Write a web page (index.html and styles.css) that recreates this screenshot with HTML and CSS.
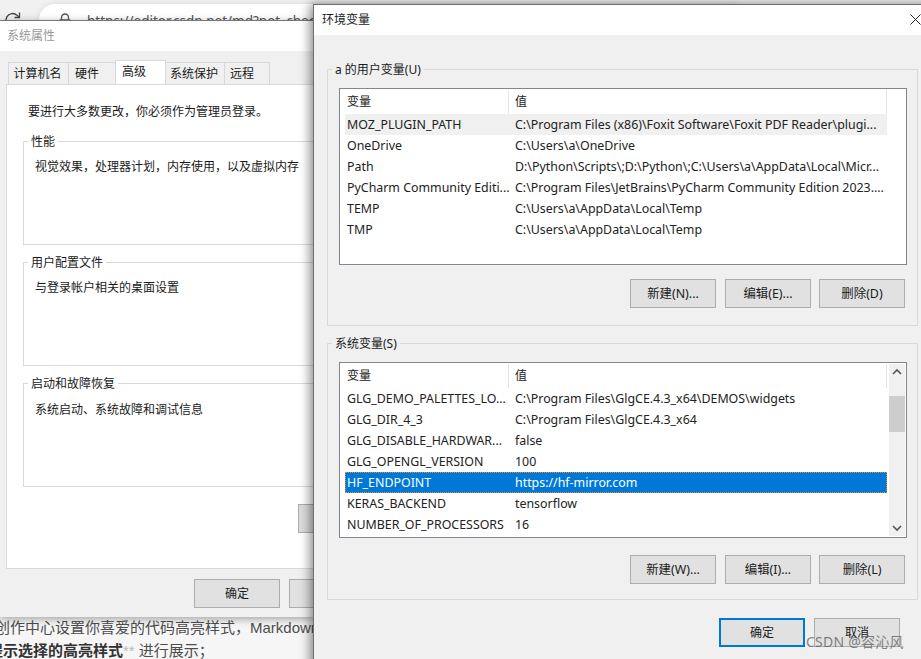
FILE: index.html
```html
<!DOCTYPE html>
<html lang="zh-CN">
<head>
<meta charset="utf-8">
<title>环境变量</title>
<link rel="stylesheet" href="styles.css">
</head>
<body>
<div class="desktop">
  <div class="browser">
    <svg class="reload" width="18" height="18" viewBox="0 0 18 18"><path d="M15 9a6.5 6.5 0 1 1-2-4.7L15 6" fill="none" stroke="#444" stroke-width="1.3"/><path d="M15.5 1.5v5h-5" fill="none" stroke="#444" stroke-width="1.3"/></svg>
    <div class="urlbar">
      <svg class="lock" width="14" height="16" viewBox="0 0 14 16"><path d="M3.5 7V4.5a3.5 3.5 0 0 1 7 0V7" fill="none" stroke="#555" stroke-width="1.3"/><rect x="1.5" y="7" width="11" height="8" rx="1" fill="none" stroke="#555" stroke-width="1.3"/></svg>
      <span class="url">https://editor.csdn.net/md?not_checkout=1</span>
    </div>
  </div>
  <div class="page-text">
    <p class="page-line">创作中心设置你喜爱的代码高亮样式，Markdown</p>
    <p class="page-line page-line-2"><b>提示选择的高亮样式</b><span class="stars">**</span> 进行展示；</p>
  </div>

  <section class="win win-left">
    <header class="title title-left">系统属性</header>
    <div class="win-body-left">
      <div class="tabs">
        <span class="tab tab-1">计算机名</span>
        <span class="tab tab-2">硬件</span>
        <span class="tab tab-active">高级</span>
        <span class="tab tab-4">系统保护</span>
        <span class="tab tab-5">远程</span>
      </div>
      <div class="panel">
        <p class="notice">要进行大多数更改，你必须作为管理员登录。</p>
        <fieldset class="sec sec-1"><legend>性能</legend><p>视觉效果，处理器计划，内存使用，以及虚拟内存</p></fieldset>
        <fieldset class="sec sec-2"><legend>用户配置文件</legend><p>与登录帐户相关的桌面设置</p></fieldset>
        <fieldset class="sec sec-3"><legend>启动和故障恢复</legend><p>系统启动、系统故障和调试信息</p></fieldset>
        <div class="panel-btn-row"><span class="btn btn-cut"></span></div>
      </div>
      <div class="left-actions">
        <span class="btn">确定</span>
        <span class="btn btn-cut"></span>
      </div>
    </div>
  </section>

  <section class="win win-right">
    <header class="title title-right">环境变量
      <svg class="close" width="11" height="11" viewBox="0 0 11 11"><path d="M.5.5l10 10M10.5.5l-10 10" stroke="#222" stroke-width="1" fill="none"/></svg>
    </header>
    <div class="win-body-right">
      <fieldset class="group group-user">
        <legend>a 的用户变量(U)</legend>
        <div class="list">
          <div class="row head"><span class="k">变量</span><span class="v">值</span></div>
          <div class="row soft"><span class="k">MOZ_PLUGIN_PATH</span><span class="v">C:\Program Files (x86)\Foxit Software\Foxit PDF Reader\plugi...</span></div>
          <div class="row"><span class="k">OneDrive</span><span class="v">C:\Users\a\OneDrive</span></div>
          <div class="row"><span class="k">Path</span><span class="v">D:\Python\Scripts\;D:\Python\;C:\Users\a\AppData\Local\Micr...</span></div>
          <div class="row"><span class="k">PyCharm Community Editi...</span><span class="v">C:\Program Files\JetBrains\PyCharm Community Edition 2023....</span></div>
          <div class="row"><span class="k">TEMP</span><span class="v">C:\Users\a\AppData\Local\Temp</span></div>
          <div class="row"><span class="k">TMP</span><span class="v">C:\Users\a\AppData\Local\Temp</span></div>
        </div>
        <div class="actions">
          <span class="btn">新建(N)...</span><span class="btn">编辑(E)...</span><span class="btn">删除(D)</span>
        </div>
      </fieldset>
      <fieldset class="group group-sys">
        <legend>系统变量(S)</legend>
        <div class="list">
          <div class="row head"><span class="k">变量</span><span class="v">值</span></div>
          <div class="row"><span class="k">GLG_DEMO_PALETTES_LO...</span><span class="v">C:\Program Files\GlgCE.4.3_x64\DEMOS\widgets</span></div>
          <div class="row"><span class="k">GLG_DIR_4_3</span><span class="v">C:\Program Files\GlgCE.4.3_x64</span></div>
          <div class="row"><span class="k">GLG_DISABLE_HARDWAR...</span><span class="v">false</span></div>
          <div class="row"><span class="k">GLG_OPENGL_VERSION</span><span class="v">100</span></div>
          <div class="row selected"><span class="k">HF_ENDPOINT</span><span class="v">https://hf-mirror.com</span></div>
          <div class="row"><span class="k">KERAS_BACKEND</span><span class="v">tensorflow</span></div>
          <div class="row"><span class="k">NUMBER_OF_PROCESSORS</span><span class="v">16</span></div>
          <div class="scrollbar">
            <svg width="16" height="16" viewBox="0 0 16 16"><path d="M4 10l4-4 4 4" fill="none" stroke="#555" stroke-width="1.6"/></svg>
            <div class="track"><div class="thumb"></div></div>
            <svg width="16" height="16" viewBox="0 0 16 16"><path d="M4 6l4 4 4-4" fill="none" stroke="#555" stroke-width="1.6"/></svg>
          </div>
        </div>
        <div class="actions">
          <span class="btn">新建(W)...</span><span class="btn">编辑(I)...</span><span class="btn">删除(L)</span>
        </div>
      </fieldset>
      <div class="footer">
        <span class="btn btn-default">确定</span><span class="btn">取消</span>
      </div>
    </div>
  </section>
  <div class="watermark">CSDN @容沁风</div>
</div>
</body>
</html>
```
FILE: styles.css
```css
* { box-sizing: border-box; }
html, body { margin: 0; padding: 0; }
body { width: 921px; height: 659px; overflow: hidden; }
.desktop {
  position: relative; width: 921px; height: 659px; overflow: hidden; background: #f6f6f6;
  font: 12px/16px "Noto Sans", "Noto Sans CJK SC", sans-serif; color: #1a1a1a;
}
.browser { display: flex; align-items: flex-start; height: 21px; padding: 4px 0 0 4px; background: #f1f1f1; }
.reload { margin-top: 7px; flex: none; }
.urlbar { display: flex; margin: 0 0 0 17px; padding: 8px 0 0 19px; gap: 15px; width: 700px; height: 40px; background: #fff; border-radius: 16px 0 0 0; box-shadow: 0 0 6px rgba(0,0,0,.1); white-space: nowrap; }
.lock { flex: none; margin-top: 1px; }
.url { font: 13.5px/18px "Noto Sans", sans-serif; color: #555; }
.page-text { position: absolute; left: -5px; top: 617px; width: 330px; height: 42px; white-space: nowrap; overflow: hidden; font: 15px/20px "Liberation Sans", "Noto Sans CJK SC", sans-serif; color: #4d4d4d; }
.page-line { margin: 0; line-height: 20px; padding-top: 1px; }
.page-line-2 { margin-top: 2px; }
.page-line-2 b { color: #333; margin-left: -7px; }
.stars { color: #bbb; }

.win { position: absolute; background: #f0f0f0; }
.win-left { left: 0; top: 20px; width: 314px; height: 597px; border-top: 1px solid #777; box-shadow: 0 2px 8px rgba(0,0,0,.35); }
.title { background: #fff; font-size: 12px; display: flex; align-items: center; justify-content: space-between; }
.title-left { height: 30px; padding-left: 7px; color: #999; }
.win-body-left { padding-top: 10px; }
.tabs { display: flex; align-items: flex-end; height: 23px; padding-left: 8px; }
.tab { height: 22px; padding-top: 3px; text-align: center; border: 1px solid #d9d9d9; border-bottom: 0; border-right: 0; background: #f0f0f0; }
.tab-1 { width: 60px; padding-right: 2px; }
.tab-2 { width: 47px; text-align: left; padding-left: 6px; }
.tab-active { width: 51px; height: 24px; background: #fff; border-right: 1px solid #d9d9d9; padding: 3px 0 0 6px; text-align: left; }
.tab-4 { width: 58px; border-left: 0; padding-right: 2px; }
.tab-5 { width: 46px; border-right: 1px solid #d9d9d9; text-align: left; padding-left: 5px; }
.panel { margin-left: 6px; height: 485px; background: #fff; border: 1px solid #d9d9d9; border-right: 0; padding: 19px 0 0 16px; overflow: hidden; }
.notice { margin: 0 0 12px 5px; }
.sec { margin: 0; padding: 9px 0 0 11px; width: 300px; min-width: 0; border: 1px solid #d9d9d9; border-right: 0; }
.sec legend { padding: 2px 3px 0; margin-left: -7px; line-height: 16px; }
.sec p { margin: 0; }
.sec-1 { height: 113px; margin-bottom: 8px; }
.sec-2 { height: 113px; margin-bottom: 8px; }
.sec-3 { height: 113px; padding-top: 10px; }
.panel-btn-row { display: flex; justify-content: flex-end; padding-top: 17px; }
.left-actions { display: flex; gap: 9px; margin: 10px 0 0 194px; }
.btn { display: flex; align-items: center; justify-content: center; width: 86px; height: 29px; flex: none; background: #e1e1e1; border: 1px solid #adadad; white-space: nowrap; }
.btn-cut { width: 30px; border-right: 0; }
.panel-btn-row .btn-cut { width: 16px; height: 29px; background: #dcdcdc; }

.win-right { left: 313px; top: 4px; width: 640px; height: 680px; border: 1px solid #6e6e6e; border-right: 0; border-bottom: 0; box-shadow: -3px 0 10px rgba(0,0,0,.45); }
.title-right { height: 30px; padding: 0 347px 0 8px; position: relative; }
.close { position: absolute; left: 596px; top: 9px; }
.win-body-right { padding: 25px 0 0 13px; }
.group { margin: 0; padding: 10px 0 0 11px; width: 591px; min-width: 0; border: 1px solid #d9d9d9; }
.group legend { padding: 2px 3px 0; margin-left: -7px; line-height: 16px; }
.group-user { height: 266px; }
.group-sys { height: 266px; margin-top: 8px; }
.list { position: relative; width: 568px; height: 177px; background: #fff; border: 1px solid #82878f; padding: 1px 17px 0 5px; overflow: hidden; }
.group-sys .list { height: 176px; }
.row { display: flex; align-items: center; height: 21px; margin-right: 2px; white-space: nowrap; color: #222; font-size: 12.4px; }
.head { height: 24px; margin-left: 1px; border-right: 1px solid #e5e5e5; font-size: 12px; }
.k { width: 163px; padding-left: 2px; flex: none; }
.v { flex: 1; padding-left: 7px; }
.head .v { border-left: 1px solid #e5e5e5; height: 24px; line-height: 24px; padding-left: 6px; }
.head .k { width: 162px; padding-left: 1px; }
.soft { background: #f0f0f0; }
.selected { background: #0078d7; color: #fff; outline: 1px dotted #f28a1c; outline-offset: -1px; }
.actions { display: flex; gap: 9px; margin: 14px 0 0 291px; }
.group-sys .actions { margin-top: 17px; }
.actions .btn { font-size: 12.4px; }
.actions .btn:last-child { margin-left: -1px; }
.scrollbar { position: absolute; right: 1px; top: 1px; bottom: 1px; width: 16px; display: flex; flex-direction: column; background: #f0f0f0; }
.scrollbar svg { flex: none; }
.track { flex: 1; position: relative; }
.thumb { position: absolute; left: 0; right: 0; top: 16px; height: 36px; background: #cdcdcd; }
.footer { display: flex; gap: 9px; margin: 18px 0 0 392px; }
.btn-default { border: 2px solid #0078d7; }
.watermark { position: absolute; left: 806px; top: 634px; font-size: 14px; line-height: 16px; letter-spacing: .25px; color: rgba(90,90,90,.75); white-space: nowrap; }
```
